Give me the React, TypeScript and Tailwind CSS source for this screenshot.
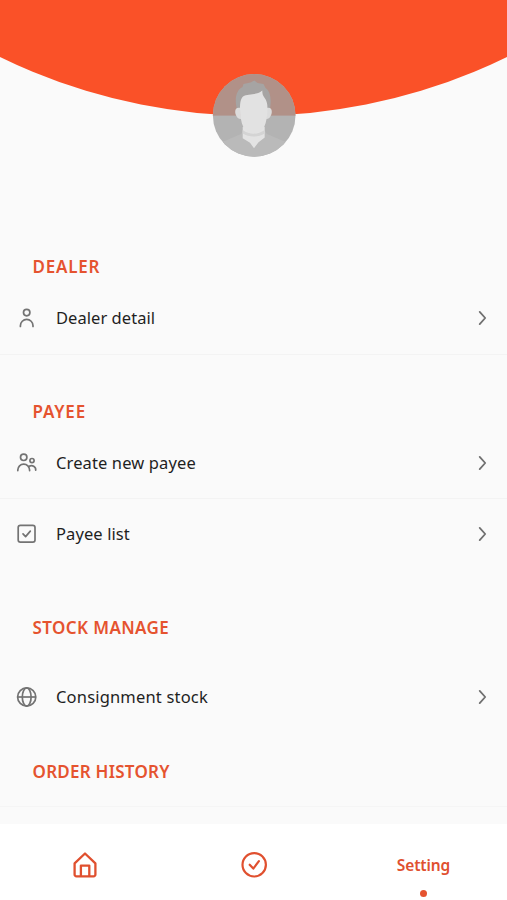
import type { ReactNode } from 'react';

function UserIcon() {
  return (
    <svg width="24" height="24" viewBox="0 0 24 24" fill="none" stroke="currentColor" strokeWidth="1.7" strokeLinecap="round">
      <circle cx="11.7" cy="6.6" r="3.2" />
      <path d="M5.400 20.400v-.7a6.300 6.300 0 0 1 12.600 0v.7" />
    </svg>
  );
}

function UsersIcon() {
  return (
    <svg width="24" height="24" viewBox="0 0 24 24" fill="none" stroke="currentColor" strokeWidth="1.7" strokeLinecap="round">
      <circle cx="8.7" cy="6.3" r="3.2" />
      <circle cx="17" cy="9.6" r="2.1" />
      <path d="M2.800 19.600v-.6a5.900 5.900 0 0 1 11.800 0v.6" />
      <path d="M14.200 15.300a4.200 4.200 0 0 1 6.500 3.900" />
    </svg>
  );
}

function CheckboxIcon() {
  return (
    <svg width="24" height="24" viewBox="0 0 24 24" fill="none" stroke="currentColor" strokeWidth="1.7" strokeLinecap="round" strokeLinejoin="round">
      <rect x="3.2" y="3.4" width="16.800" height="16.800" rx="2.2" />
      <path d="m8 11.900 2.600 2.700 4.700-5.500" />
    </svg>
  );
}

function GlobeIcon() {
  return (
    <svg width="24" height="24" viewBox="0 0 24 24" fill="none" stroke="currentColor" strokeWidth="1.7">
      <circle cx="11.7" cy="12" r="9.1" />
      <ellipse cx="11.7" cy="12" rx="4.400" ry="9.1" />
      <path d="M2.700 12h18" />
    </svg>
  );
}

function ChevronIcon() {
  return (
    <svg width="12" height="18" viewBox="0 0 12 18" fill="none" stroke="#707070" strokeWidth="1.8" strokeLinecap="round" strokeLinejoin="round">
      <path d="m3.700 2.900 5.500 6.100-5.500 6.100" />
    </svg>
  );
}

function HomeIcon() {
  return (
    <svg width="30" height="30" viewBox="0 0 30 30" fill="none" stroke="currentColor" strokeWidth="2.3" strokeLinejoin="round">
      <path d="M4.600 13.400 15 3.500l10.400 9.900v11.100a1.800 1.800 0 0 1-1.800 1.800H6.400a1.800 1.800 0 0 1-1.800-1.800z" />
      <path d="M10.900 26.300V15.600h8.400v10.700" />
    </svg>
  );
}

function CircleCheckIcon() {
  return (
    <svg width="30" height="30" viewBox="0 0 30 30" fill="none" stroke="currentColor" strokeWidth="2.2" strokeLinecap="round" strokeLinejoin="round">
      <circle cx="15.2" cy="14.8" r="11.700" />
      <path d="m10.700 14.700 3.600 3.900 5.600-7.400" />
    </svg>
  );
}

function Avatar() {
  return (
    <svg width="84" height="84" viewBox="0 0 84 84">
      <defs>
        <clipPath id="avatar-clip">
          <circle cx="42.2" cy="42.4" r="41.3" />
        </clipPath>
      </defs>
      <g clipPath="url(#avatar-clip)">
        <rect width="84" height="84" fill="#b3b3b3" />
        <rect width="84" height="42.6" fill="#b19188" />
        <path d="M0 84V73l15-6 14-6 2-3h22l2 3 14 6 15 6v11z" fill="#bababa" />
        <path d="M30.700 54h22v10.500l-6.400 5-4.300 5.700-4-5.500-7.300-4.500z" fill="#e3e3e3" />
        <path d="M30.700 57c7 5 15 5 22 0v3.500c-6 4-16 4-22 0z" fill="#d4d4d4" />
        <path d="M25.500 38c-3-10-2.500-20 5-24l1-3 7-1.500 3.800-2 3.200 2.500 6 1 2 4c5 3 6.500 12 4 23z" fill="#a6a4a3" />
        <path d="M28.500 35c-4.500-1-6 2-5 6 1 3 2.500 5 5.500 5zM55 35c4-1 5.500 2 4.500 6-1 3-2.500 5-5.500 5z" fill="#dcdcdc" />
        <path d="M28 36c0-6 .5-10 3-12.500 5-3.500 13-.5 19.300-6 0 3 .4 4.500 1.700 6.500 3 4 3.500 7 3.500 12 0 6-1 13-3.500 18.500-3 4-6.500 5.500-10.200 5.500s-7.300-1.500-10.300-5.500C29 49 28 42 28 36z" fill="#e2e2e2" />
      </g>
    </svg>
  );
}

function SectionTitle({ className = '', children }: { className?: string; children: ReactNode }) {
  return (
    <h2 className={`flex h-7 items-center pl-[32.5px] text-[17px] font-semibold text-[#e5532f] ${className}`}>
      {children}
    </h2>
  );
}

function MenuRow({ icon, className = '', children }: { icon: ReactNode; className?: string; children: ReactNode }) {
  return (
    <button className={`flex w-full items-center border-[#f3f3f3] pr-[19px] pl-[15px] text-left ${className}`}>
      <span className="text-[#737373]">{icon}</span>
      <span className="ml-[17px] flex-1 text-[16.5px] text-[#1f1f1f]">{children}</span>
      <ChevronIcon />
    </button>
  );
}

export default function App() {
  return (
    <div className="flex h-[900px] w-[507px] flex-col overflow-hidden bg-[#fafafa] font-['Noto_Sans',sans-serif]">
      <header className="relative h-[253px] shrink-0">
        <svg className="block" width="507" height="117" viewBox="0 0 507 117">
          <circle cx="253.5" cy="-461.3" r="577" fill="#fa5128" />
        </svg>
        <div className="absolute top-[73px] left-[212px]">
          <Avatar />
        </div>
      </header>

      <main className="flex-1 overflow-hidden">
        <section>
          <SectionTitle className="tracking-[0.8px]">DEALER</SectionTitle>
          <MenuRow icon={<UserIcon />} className="mt-px h-[73px] border-b tracking-[0.05px]">
            Dealer detail
          </MenuRow>
        </section>

        <section className="mt-[43px]">
          <SectionTitle className="tracking-[0.85px]">PAYEE</SectionTitle>
          <MenuRow icon={<UsersIcon />} className="mt-px h-[72px] border-b pt-px tracking-[0.12px]">
            Create new payee
          </MenuRow>
          <MenuRow icon={<CheckboxIcon />} className="h-[70px] tracking-[0.1px]">
            Payee list
          </MenuRow>
        </section>

        <section className="mt-[45px]">
          <SectionTitle className="tracking-[0.4px]">STOCK MANAGE</SectionTitle>
          <MenuRow icon={<GlobeIcon />} className="mt-[19px] h-[72px] tracking-[0.18px]">
            Consignment stock
          </MenuRow>
        </section>

        <section className="mt-[25px] h-[49px] border-b border-[#f5f5f5]">
          <SectionTitle className="tracking-[0.25px]">ORDER HISTORY</SectionTitle>
        </section>
      </main>

      <nav className="grid h-[76px] shrink-0 grid-cols-3 bg-white text-[#e0502f]">
        <button className="flex justify-center pt-[26px]">
          <HomeIcon />
        </button>
        <button className="flex justify-center pt-[26px]">
          <CircleCheckIcon />
        </button>
        <button className="flex flex-col items-center pt-[29px] pl-[2px]">
          <span className="text-[15.5px] leading-6 font-semibold tracking-[-0.1px]">Setting</span>
          <span className="mt-[13px] size-[7px] rounded-full bg-[#e5532f]" />
        </button>
      </nav>
    </div>
  );
}
